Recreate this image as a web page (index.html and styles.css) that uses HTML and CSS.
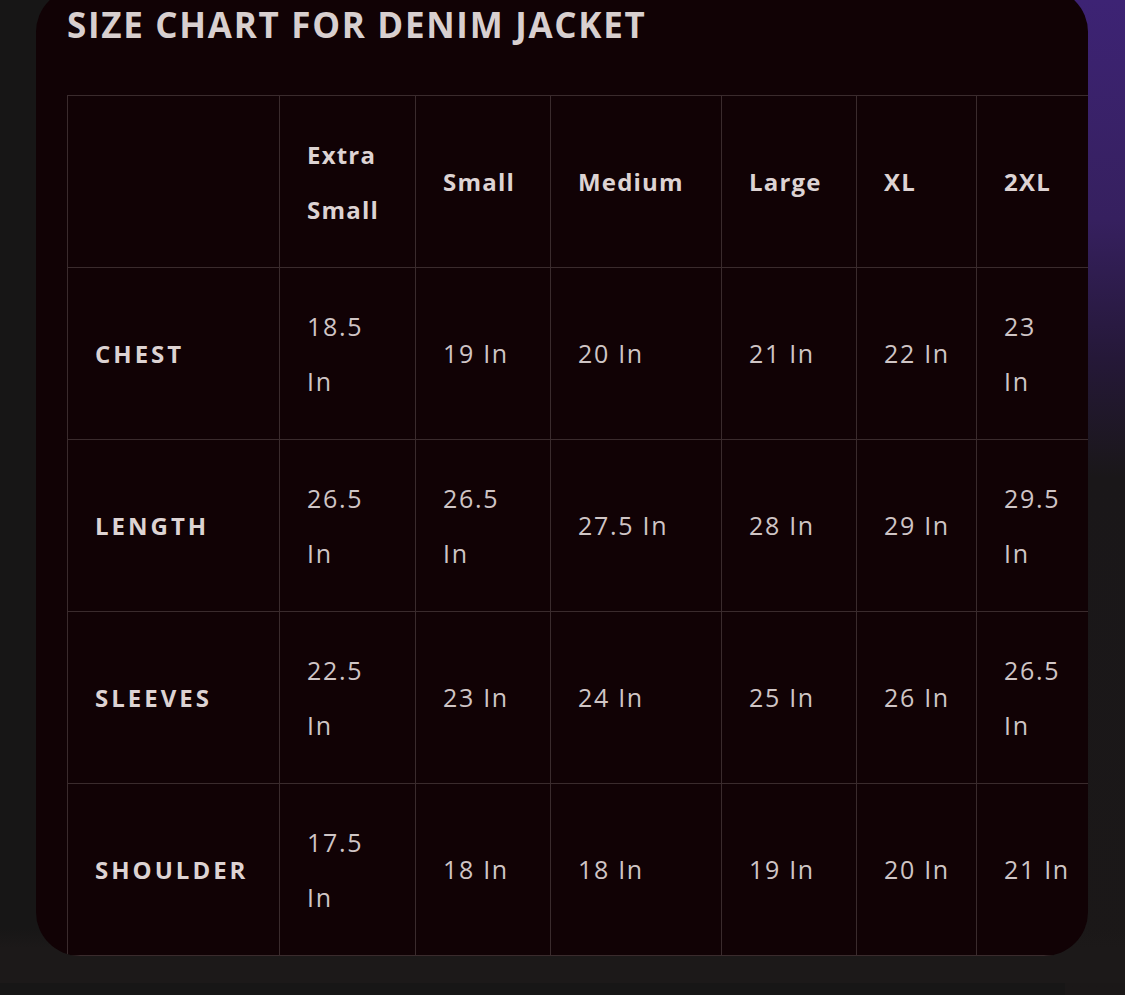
FILE: index.html
```html
<!DOCTYPE html>
<html lang="en">
<head>
<meta charset="utf-8">
<title>Size Chart for Denim Jacket</title>
<link rel="stylesheet" href="styles.css">
</head>
<body>
<div class="page">
  <section class="card">
    <h2 class="title">SIZE CHART FOR DENIM JACKET</h2>
    <table class="chart">
      <colgroup>
        <col class="c-label">
        <col class="c-xs">
        <col class="c-s">
        <col class="c-m">
        <col class="c-l">
        <col class="c-xl">
        <col class="c-2xl">
      </colgroup>
      <thead>
        <tr>
          <th></th>
          <th>Extra Small</th>
          <th>Small</th>
          <th>Medium</th>
          <th>Large</th>
          <th>XL</th>
          <th>2XL</th>
        </tr>
      </thead>
      <tbody>
        <tr>
          <th class="row-label">CHEST</th>
          <td>18.5 In</td>
          <td>19 In</td>
          <td>20 In</td>
          <td>21 In</td>
          <td>22 In</td>
          <td>23<br>In</td>
        </tr>
        <tr>
          <th class="row-label">LENGTH</th>
          <td>26.5 In</td>
          <td>26.5 In</td>
          <td>27.5 In</td>
          <td>28 In</td>
          <td>29 In</td>
          <td>29.5 In</td>
        </tr>
        <tr>
          <th class="row-label">SLEEVES</th>
          <td>22.5 In</td>
          <td>23 In</td>
          <td>24 In</td>
          <td>25 In</td>
          <td>26 In</td>
          <td>26.5 In</td>
        </tr>
        <tr>
          <th class="row-label">SHOULDER</th>
          <td>17.5 In</td>
          <td>18 In</td>
          <td>18 In</td>
          <td>19 In</td>
          <td>20 In</td>
          <td>21 In</td>
        </tr>
      </tbody>
    </table>
  </section>
</div>
</body>
</html>
```

FILE: styles.css
```css
html, body {
  margin: 0;
  padding: 0;
}

body {
  width: 1125px;
  height: 995px;
  overflow: hidden;
  background-color: #171616;
  background-image:
    linear-gradient(180deg, #3d2374 0%, #36205f 22%, #251838 36%, #1a1719 48%, #1b1818 100%);
  background-repeat: no-repeat;
  background-size: 60px 100%;
  background-position: right top;
  font-family: "Open Sans", "Noto Sans", sans-serif;
}

.page {
  padding-left: 36px;
  height: 995px;
  background: linear-gradient(180deg, rgba(0,0,0,0) 940px, #1c1919 960px);
}

.card {
  width: 1052px;
  height: 968px;
  margin-top: -12px;
  box-sizing: border-box;
  padding: 17px 0 0 31px;
  background: #110205;
  border-radius: 44px;
  overflow: hidden;
}

.title {
  margin: 0 0 50px 0;
  font-size: 35px;
  line-height: 40px;
  font-weight: 700;
  letter-spacing: 1.7px;
  color: #d8cfcf;
}

.chart {
  border-collapse: collapse;
  table-layout: fixed;
  width: 1034px;
  color: #cfc5c5;
  font-size: 25px;
  line-height: 55px;
  letter-spacing: 1.7px;
}

.c-label { width: 212px; }
.c-xs { width: 136px; }
.c-s { width: 135px; }
.c-m { width: 171px; }
.c-l { width: 135px; }
.c-xl { width: 120px; }
.c-2xl { width: 125px; }

.chart th,
.chart td {
  border: 1px solid #3a2b2d;
  padding: 0 22px 0 27px;
  text-align: left;
  vertical-align: middle;
  font-weight: 400;
}

.chart tr {
  height: 172px;
}

.chart thead th {
  font-weight: 700;
  font-size: 24px;
  color: #ddd3d3;
  letter-spacing: 1.2px;
}

.chart .row-label {
  font-weight: 700;
  font-size: 24px;
  letter-spacing: 3px;
  color: #ddd3d3;
}
```
